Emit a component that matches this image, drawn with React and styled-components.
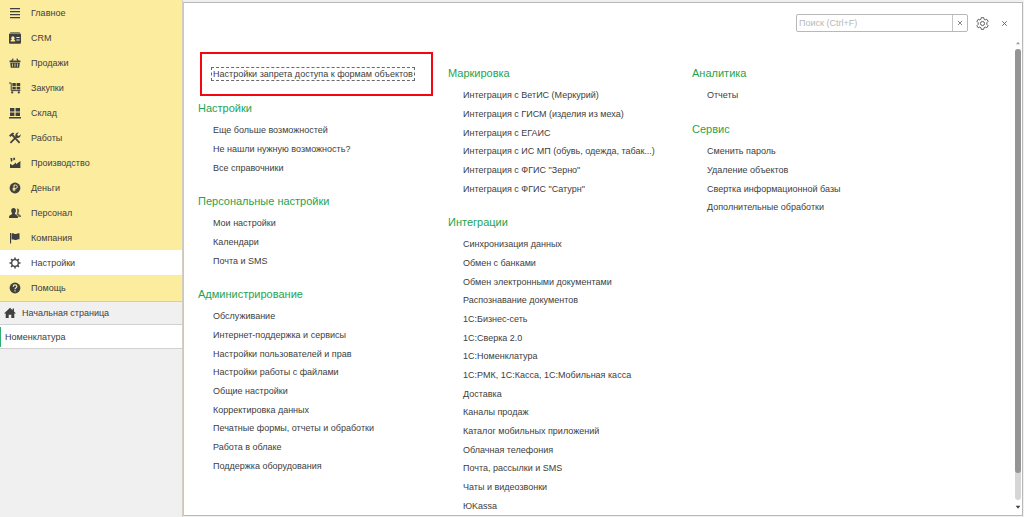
import React, { useState } from "react";
import styled, { createGlobalStyle } from "styled-components";

const GlobalStyle = createGlobalStyle`
* { box-sizing: border-box; }
body {
    margin: 0;
    background: #f0f0f0;
    color: #404040;
    font-family: "Liberation Sans", Arial, sans-serif;
    font-size: 9px;
}
ul { list-style: none; margin: 0; padding: 0; }
a { color: inherit; text-decoration: none; }
button { font: inherit; color: inherit; background: none; border: 0; padding: 0; cursor: pointer; }
`;

const icons = {
  main: <path d="M1 1h10v1.3H1zM1 4h10v1.3H1zM1 7h10v1.3H1zM1 10h10v1.3H1z" />,
  crm: (
    <>
      <path d="M1.5 0h9l.8 1.2H.7z" opacity=".6" />
      <path
        fillRule="evenodd"
        d="M1 1.6h10a1 1 0 0 1 1 1v8.2a1 1 0 0 1-1 1H1a1 1 0 0 1-1-1V2.6a1 1 0 0 1 1-1zM1.6 9.4h4.6c0-1.2-.6-1.5-1.4-1.8a1.7 1.7 0 1 0-1.8 0c-.8.3-1.4.6-1.4 1.8zM7.4 5v1h3.2V5zM7.4 7.4v1h3.2v-1z"
      />
    </>
  ),
  sales: (
    <>
      <path d="M2.6 4.2L4.2 1.6M9.4 4.2L7.8 1.6" stroke="currentColor" strokeWidth="1.1" />
      <path fillRule="evenodd" d="M.6 3.6h10.8v1.6H.6zM1.2 5.8h9.6l-.6 5H1.8zM3.2 6.6v3.2h.7V6.6zM5.6 6.6v3.2h.8V6.6zM8.1 6.6v3.2h.7V6.6z" />
    </>
  ),
  purchases: (
    <>
      <path d="M0 1h2.2v7.6H11.4" fill="none" stroke="currentColor" strokeWidth="1" />
      <path d="M3.4 1h3.4v3H3.4zM7.6 1h3.6v3H7.6zM3.4 4.8h3.4v2.8H3.4zM7.6 4.8h3.6v2.8H7.6z" />
      <circle cx="3.2" cy="10.4" r="1.1" />
      <circle cx="9.8" cy="10.4" r="1.1" />
    </>
  ),
  stock: <path d="M1 1h4.4v3.6H1zM6.6 1H11v3.6H6.6zM1 5.4h4.4V9H1zM6.6 5.4H11V9H6.6zM0 10h12v1.4H0z" />,
  works: (
    <>
      <path d="M1.4 10.8l6-6M4.6 4.4l6 6.4" stroke="currentColor" strokeWidth="1.7" />
      <path d="M0 3.6L3.2.8l2.4.2-1.4 1.2L5.6 4 4.2 5.4 2.8 3.8 1.4 5z" />
      <path d="M9.8.6L8.2 2.2l.4 1.4 1.4.3 1.6-1.6a3 3 0 0 1-4 3.4L6.4 4.4A3 3 0 0 1 9.8.6z" />
    </>
  ),
  production: <path d="M1 11V6.8l2.6 1.4L7 5.6v1.6l4.400-3.200V11zM1.400 1h1.800l.3 2.800-1.500 1.200zM4.200.8H6l.2 1.800-1.800.9z" />,
  money: (
    <>
      <circle cx="6" cy="6" r="5.4" />
      <path d="M5 9.2V3h1.6a1.6 1.6 0 0 1 0 3.4H3.6M3.6 7.8h3" fill="none" stroke="#fbec9e" strokeWidth="1" />
    </>
  ),
  staff: (
    <>
      <path d="M7.8 1.6a2 2 0 0 1 2.4 2.2c0 1-.4 1.8-.8 2.4 0 1.4 2.6 1.2 2.6 3.2v.6H9.4c-.1-1.4-1-2-2-2.4.8-1.6 1.2-4 .4-6z" opacity=".75" />
      <path d="M4.6 1c1.5 0 2.3 1 2.3 2.5 0 1.2-.5 2.2-1 2.8 0 1.8 3.1 1.4 3.1 4V11H0v-.7c0-2.6 3.2-2.2 3.2-4-.6-.6-1-1.6-1-2.8C2.2 2 3.1 1 4.6 1z" />
    </>
  ),
  company: <path d="M1 1h1.1v10.5H1zM2.6 1.5c1.6-.8 3 .8 4.6.5 1-.2 1.8-.8 3.3-.6v6c-1.5-.2-2.3.5-3.3.7-1.6.2-3-1.2-4.6-.5z" />,
  settings: (
    <>
      <circle cx="6" cy="6" r="3.3" fill="none" stroke="currentColor" strokeWidth="1.3" />
      <path
        d="M6 .5v2M6 9.5v2M.5 6h2M9.5 6h2M2.1 2.1l1.4 1.4M8.5 8.5l1.4 1.4M9.9 2.1L8.500 3.500M3.500 8.500L2.100 9.900"
        stroke="currentColor"
        strokeWidth="1.5"
      />
    </>
  ),
  help: (
    <>
      <circle cx="6" cy="6" r="5.4" />
      <path d="M4.2 4.7C4.2 3.4 5 2.9 6 2.9s1.9.6 1.9 1.6C7.9 5.7 6 5.8 6 7.3M6 8.2v1.3" fill="none" stroke="#fbec9e" strokeWidth="1.2" />
    </>
  ),
  home: <path d="M6 .8L0 6.4h1.7V11h3V7.8h2.6V11h3V6.4H12L10 4.5V1.6H8.6v1.6z" />,
  gear: (
    <g fill="none" stroke="currentColor" strokeWidth=".9" strokeLinejoin="round">
      <path d="M4.9.6h2.2l.4 1.6 1 .5 1.5-.6 1.2 1.9-1.2 1.2v1.6l1.2 1.2-1.2 1.9-1.5-.6-1 .5-.4 1.6H4.9l-.4-1.6-1-.5-1.5.6L.8 8 2 6.8V5.2L.8 4 2 2.1l1.5.6 1-.5z" />
      <circle cx="6" cy="6" r="1.9" />
    </g>
  ),
  close: <path d="M3 3l6 6M9 3L3 9" stroke="currentColor" strokeWidth="1.2" />,
  up: <path d="M6 4l3 4H3z" />,
  down: <path d="M2.5 4h7L6 8.5z" />,
};

const Icon = ({ name, size = 12 }) => (
  <svg width={size} height={size} viewBox="0 0 12 12" fill="currentColor" aria-hidden="true">
    {icons[name]}
  </svg>
);

const menu = [
  ["main", "Главное"],
  ["crm", "CRM"],
  ["sales", "Продажи"],
  ["purchases", "Закупки"],
  ["stock", "Склад"],
  ["works", "Работы"],
  ["production", "Производство"],
  ["money", "Деньги"],
  ["staff", "Персонал"],
  ["company", "Компания"],
  ["settings", "Настройки"],
  ["help", "Помощь"],
];

const columns = [
  [
    { items: ["Настройки запрета доступа к формам объектов"], marked: true },
    {
      title: "Настройки",
      items: ["Еще больше возможностей", "Не нашли нужную возможность?", "Все справочники"],
    },
    {
      title: "Персональные настройки",
      items: ["Мои настройки", "Календари", "Почта и SMS"],
    },
    {
      title: "Администрирование",
      items: [
        "Обслуживание",
        "Интернет-поддержка и сервисы",
        "Настройки пользователей и прав",
        "Настройки работы с файлами",
        "Общие настройки",
        "Корректировка данных",
        "Печатные формы, отчеты и обработки",
        "Работа в облаке",
        "Поддержка оборудования",
      ],
    },
  ],
  [
    {
      title: "Маркировка",
      items: [
        "Интеграция с ВетИС (Меркурий)",
        "Интеграция с ГИСМ (изделия из меха)",
        "Интеграция с ЕГАИС",
        "Интеграция с ИС МП (обувь, одежда, табак...)",
        'Интеграция с ФГИС "Зерно"',
        'Интеграция с ФГИС "Сатурн"',
      ],
    },
    {
      title: "Интеграции",
      items: [
        "Синхронизация данных",
        "Обмен с банками",
        "Обмен электронными документами",
        "Распознавание документов",
        "1С:Бизнес-сеть",
        "1С:Сверка 2.0",
        "1С:Номенклатура",
        "1С:РМК, 1С:Касса, 1С:Мобильная касса",
        "Доставка",
        "Каналы продаж",
        "Каталог мобильных приложений",
        "Облачная телефония",
        "Почта, рассылки и SMS",
        "Чаты и видеозвонки",
        "ЮKassa",
      ],
    },
  ],
  [
    { title: "Аналитика", items: ["Отчеты"] },
    {
      title: "Сервис",
      items: ["Сменить пароль", "Удаление объектов", "Свертка информационной базы", "Дополнительные обработки"],
    },
  ],
];

export default function App() {
  const [active, setActive] = useState("settings");
  const [query, setQuery] = useState("");

  return (
    <Page>
      <GlobalStyle />
      <Sidebar>
        <Menu>
          {menu.map(([id, label]) => (
            <li key={id}>
              <MenuButton type="button" $active={id === active} onClick={() => setActive(id)}>
                <Icon name={id} />
                {label}
              </MenuButton>
            </li>
          ))}
        </Menu>
        <HomeTab href="#home">
          <Icon name="home" />
          Начальная страница
        </HomeTab>
        <OpenTab href="#items">Номенклатура</OpenTab>
      </Sidebar>
      <Panel>
        <Toolbar>
          <Search>
            <SearchInput
              type="text"
              aria-label="Поиск"
              placeholder="Поиск (Ctrl+F)"
              value={query}
              onChange={(e) => setQuery(e.target.value)}
            />
            <ClearButton type="button" aria-label="Очистить" onClick={() => setQuery("")}>
              <Icon name="close" size={8} />
            </ClearButton>
          </Search>
          <ToolButton type="button" aria-label="Настройка">
            <Icon name="gear" size={13} />
          </ToolButton>
          <ToolButton type="button" aria-label="Закрыть">
            <Icon name="close" size={9} />
          </ToolButton>
        </Toolbar>
        <Body>
          <Columns>
            {columns.map((sections, i) => (
              <div key={i}>
                {sections.map(({ title, items, marked }) => (
                  <Section key={items[0]} $untitled={!title}>
                    {title && <Title>{title}</Title>}
                    <List>
                      {items.map((item) => (
                        <li key={item}>
                          <Command href="#command" $marked={marked}>
                            {item}
                          </Command>
                        </li>
                      ))}
                    </List>
                  </Section>
                ))}
              </div>
            ))}
          </Columns>
          <ScrollBar>
            <ScrollButton type="button" aria-label="Вверх" $faded>
              <Icon name="up" size={8} />
            </ScrollButton>
            <Track>
              <Thumb />
            </Track>
            <ScrollButton type="button" aria-label="Вниз">
              <Icon name="down" size={8} />
            </ScrollButton>
          </ScrollBar>
        </Body>
      </Panel>
    </Page>
  );
}

const Page = styled.div`
display: flex;
height: 100vh;
overflow: hidden;
`;

const Sidebar = styled.nav`
flex: 0 0 183px;
border-right: 1px solid #d2cfc0;
`;

const Menu = styled.ul`
padding-bottom: 1px;
background: #fbec9e;
border-bottom: 1px solid #d9cf9c;
`;

const MenuButton = styled.button`
display: flex;
align-items: center;
gap: 10px;
width: 100%;
height: 25px;
padding-left: 9px;
text-align: left;
background: ${(props) => (props.$active ? "#ffffff" : "transparent")};
`;

const HomeTab = styled.a`
display: flex;
align-items: center;
gap: 6px;
height: 23px;
padding-left: 4px;
border-bottom: 1px solid #d0d0d0;
`;

const OpenTab = styled.a`
display: flex;
align-items: center;
gap: 4px;
height: 24px;
background: #ffffff;
border-bottom: 1px solid #d0d0d0;
&::before {
    content: "";
    width: 1px;
    height: 20px;
    background: #2fae74;
}
`;

const Panel = styled.main`
flex: 1;
min-width: 0;
display: flex;
flex-direction: column;
margin: 2px 1px 1px 0;
background: #ffffff;
border: 1px solid #b8b8b8;
border-left-color: #c8c8c8;
`;

const Toolbar = styled.div`
display: flex;
align-items: center;
justify-content: flex-end;
gap: 7px;
padding: 11px 10px 4px;
`;

const Search = styled.div`
display: flex;
width: 172px;
height: 18px;
border: 1px solid #b8b8b8;
border-radius: 2px;
`;

const SearchInput = styled.input`
flex: 1;
min-width: 0;
padding: 0 2px;
font: inherit;
color: inherit;
background: none;
border: 0;
outline: none;
&::placeholder {
    color: #b8b8b8;
    opacity: 1;
}
`;

const ClearButton = styled.button`
display: grid;
place-items: center;
width: 15px;
color: #666666;
border-left: 1px solid #c4c4c4;
`;

const ToolButton = styled.button`
display: grid;
place-items: center;
width: 15px;
height: 15px;
color: #5c5c5c;
`;

const Body = styled.div`
flex: 1;
min-height: 0;
display: flex;
`;

const Columns = styled.div`
flex: 1;
min-width: 0;
display: grid;
grid-template-columns: 250fr 244fr 322fr;
align-items: start;
padding: 27px 0 0 14px;
overflow: hidden;
`;

const Section = styled.section`
padding-top: ${(props) => (props.$untitled ? "2px" : "0")};
margin-bottom: 14px;
`;

const Title = styled.h2`
margin: 0 0 3px;
color: #1fa350;
font-size: 11px;
font-weight: normal;
line-height: 20px;
`;

/* every third row is a pixel tighter */
const List = styled.ul`
padding-left: 15px;
li {
    height: 19px;
    line-height: 19px;
    white-space: nowrap;
}
li:nth-child(3n) {
    height: 18px;
}
`;

const Command = styled.a`
${(props) =>
  props.$marked &&
  `
position: relative;
outline: 1px dashed #6a6a6a;
outline-offset: 1px;
&::after {
    content: "";
    position: absolute;
    inset: -17px -20px -17px -13px;
    border: 2px solid #f5050f;
}
`}
`;

const ScrollBar = styled.div`
flex: 0 0 8px;
display: flex;
flex-direction: column;
align-items: center;
padding-bottom: 2px;
`;

const ScrollButton = styled.button`
display: grid;
place-items: center;
height: 13px;
opacity: ${(props) => (props.$faded ? 0.5 : 1)};
`;

const Track = styled.div`
flex: 1;
width: 6px;
background: #d6d6d6;
border-radius: 3px;
`;

const Thumb = styled.div`
width: 6px;
height: 94%;
background: #959595;
border-radius: 3px;
`;
